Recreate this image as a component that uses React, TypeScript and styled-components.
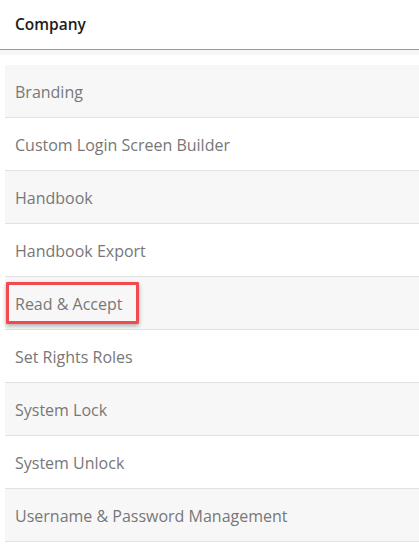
import React from "react";
import styled, { createGlobalStyle } from "styled-components";

const Global = createGlobalStyle`
  html, body { margin: 0; padding: 0; background: #fff; }
  body { font-family: "Open Sans", "Noto Sans", sans-serif; }
`;

const Page = styled.div`
  width: 419px;
  height: 544px;
  overflow: hidden;
  background: #fff;
`;

const Header = styled.div`
  height: 50px;
  box-sizing: border-box;
  display: flex;
  align-items: center;
  padding: 0 15px 2px;
  font-size: 15.5px;
  font-weight: 600;
  color: #1c1c1c;
  border-bottom: 1px solid #9a9a9a;
`;

const Band = styled.div`
  height: 5px;
  background: #f5f6f8;
`;

const List = styled.ul`
  list-style: none;
  margin: 10px 0 0 5px;
  padding: 0;
`;

const Row = styled.li<{ $shaded: boolean }>`
  position: relative;
  height: 52px;
  box-sizing: border-box;
  height: 53px;
  display: flex;
  align-items: center;
  padding: 2px 0 0 10px;
  font-size: 16px;
  color: #777;
  background: ${(p) => (p.$shaded ? "#f7f7f7" : "#fff")};
  border-bottom: 1px solid #e2e2e2;
`;

const Highlight = styled.span`
  position: absolute;
  left: 1px;
  top: 5px;
  width: 133px;
  height: 42px;
  box-sizing: border-box;
  border: 3px solid #f24a4e;
  border-radius: 1px;
  box-shadow: 0 2px 4px rgba(0, 0, 0, 0.3);
  pointer-events: none;
`;

const items = [
  "Branding",
  "Custom Login Screen Builder",
  "Handbook",
  "Handbook Export",
  "Read & Accept",
  "Set Rights Roles",
  "System Lock",
  "System Unlock",
  "Username & Password Management",
];

export default function App() {
  return (
    <Page>
      <Global />
      <Header>Company</Header>
      <Band />
      <List>
        {items.map((it, i) => (
          <Row key={it} $shaded={i % 2 === 0}>
            {it}
            {it === "Read & Accept" && <Highlight />}
          </Row>
        ))}
      </List>
    </Page>
  );
}
